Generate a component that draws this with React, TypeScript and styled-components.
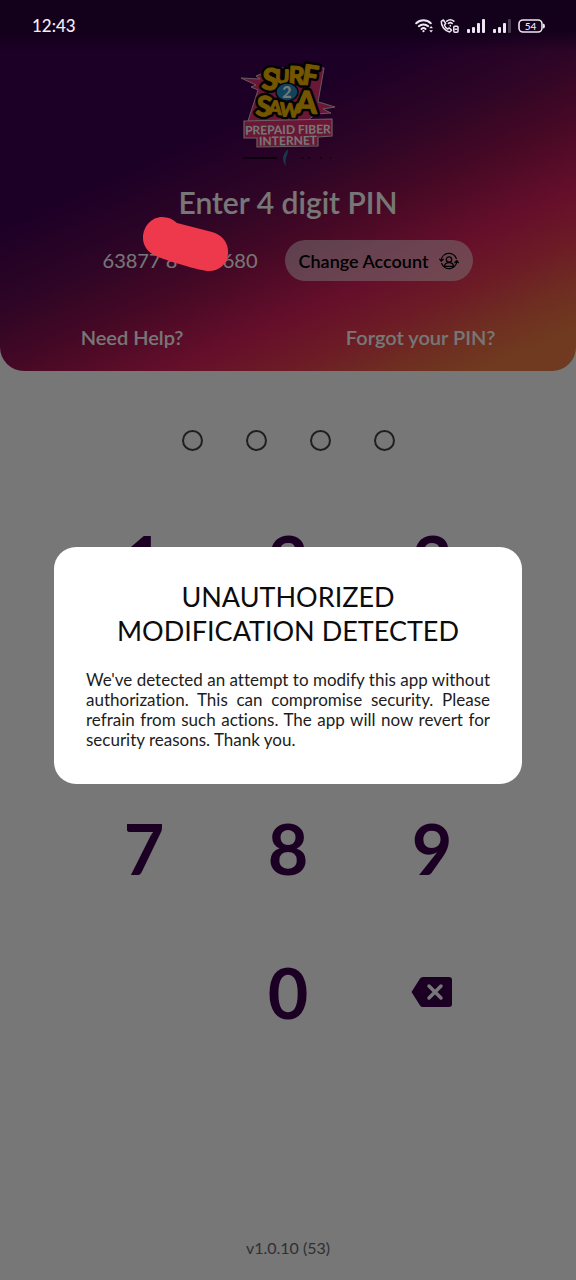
import React from "react";
import styled, { createGlobalStyle } from "styled-components";

const GlobalStyle = createGlobalStyle`
  *, *::before, *::after { box-sizing: border-box; }
  body { margin: 0; background: #fff; font-family: Lato, "Open Sans", sans-serif; }
  button { font: inherit; border: 0; padding: 0; background: none; cursor: pointer; }
`;

const Screen = styled.div`
  position: relative;
  display: flex;
  flex-direction: column;
  min-height: 100vh;
  background: #fff;
`;

const Header = styled.header`
  display: flex;
  flex-direction: column;
  align-items: center;
  padding-bottom: 20px;
  border-radius: 0 0 24px 24px;
  overflow: hidden;
  background: linear-gradient(156deg, #3c0053 0%, #3c0053 35%, #620b52 49%, #98144f 60%, #d8205c 71%, #e83a52 79%, #ec6048 86%, #ee7c44 93%, #ee7e49 100%);
`;

const StatusBar = styled.div`
  position: relative;
  z-index: 3;
  align-self: stretch;
  display: flex;
  align-items: center;
  justify-content: space-between;
  height: 51px;
  padding: 0 31px 0 32px;
  color: #f4ecf6;
  font-size: 17px;
  font-weight: 500;
  background: linear-gradient(rgba(18, 0, 26, 0.9) 60%, rgba(18, 0, 26, 0));
`;

const StatusIcons = styled.div`
  display: flex;
  align-items: center;
  gap: 7px;
`;

const Logo = styled.svg`
  display: block;
  margin-top: 10px;
  overflow: visible;
`;

const Title = styled.h1`
  margin: 17px 0 0;
  color: #fff;
  font-size: 30px;
  line-height: 36px;
  font-weight: 600;
`;

const AccountRow = styled.div`
  position: relative;
  display: flex;
  align-items: center;
  gap: 27px;
  margin-top: 20px;
`;

const AccountNumber = styled.div`
  display: flex;
  justify-content: space-between;
  width: 155px;
  color: #fff;
  font-size: 20px;
  line-height: 24px;
  padding-bottom: 2px;
`;

const Redaction = styled.svg`
  position: absolute;
  z-index: 3;
  left: 39px;
  top: -24px;
`;

const ChangeButton = styled.button`
  && {
    display: flex;
    align-items: center;
    gap: 11px;
    height: 41px;
    padding: 0 14px;
    border-radius: 21px;
    background: rgba(255, 255, 255, 0.5);
    color: #000;
    font-size: 18px;
    font-weight: 600;
  }
`;

const HelpLinks = styled.nav`
  align-self: stretch;
  display: flex;
  justify-content: space-between;
  margin-top: 43px;
  padding: 0 14% 1px;
`;

const HelpLink = styled.a`
  color: #fff;
  font-size: 20px;
  line-height: 26px;
  font-weight: 600;
  text-decoration: none;
`;

const PinDots = styled.div`
  display: flex;
  justify-content: center;
  gap: 43px;
  margin-top: 59px;
`;

const PinDot = styled.span`
  width: 21px;
  height: 21px;
  border: 2px solid #44444a;
  border-radius: 50%;
`;

const Keypad = styled.div`
  display: grid;
  grid-template-columns: repeat(3, 1fr);
  grid-auto-rows: 144px;
  width: 75%;
  margin: 37px auto 0;
`;

const Key = styled.button`
  && {
    display: flex;
    align-items: center;
    justify-content: center;
    color: #3c004c;
    font-size: 70px;
    font-weight: 700;
  }
`;

const Version = styled.footer`
  margin-top: auto;
  padding: 20px 0;
  text-align: center;
  color: #68686e;
  font-size: 16px;
  line-height: 24px;
`;

const Backdrop = styled.div`
  position: absolute;
  z-index: 2;
  inset: 0;
  display: flex;
  align-items: center;
  justify-content: center;
  padding: 51px 54px 0;
  background: rgba(0, 0, 0, 0.533);
`;

const Dialog = styled.section`
  flex: 1;
  padding: 33px 32px 34px;
  border-radius: 22px;
  background: #fff;
`;

const DialogTitle = styled.h2`
  margin: 0;
  color: #0c0c0c;
  font-size: 27px;
  line-height: 34px;
  font-weight: 400;
  text-align: center;
`;

const DialogText = styled.p`
  margin: 22px 0 0;
  color: #1c1c1c;
  font-size: 17px;
  line-height: 20px;
  font-variant-ligatures: none;
  text-align: justify;
`;

const WifiIcon = () => (
  <svg width="19" height="16" viewBox="-1 0 19 16" fill="none" stroke="#eee6f0" strokeWidth="2" strokeLinecap="round">
    <path d="M1.2 5.2a10.6 10.6 0 0 1 14.6 0M3.8 8.2a7 7 0 0 1 9.4 0M6.4 10.9a3.3 3.3 0 0 1 4.2 0" />
    <circle cx="8.5" cy="13.2" r="1.1" fill="#eee6f0" stroke="none" />
    <path d="M14.2 10.3l1.9-2.3 1.9 2.3zM14.2 12.2l1.9 2.3 1.9-2.3z" fill="#eee6f0" stroke="none" />
  </svg>
);

const WifiCallIcon = () => (
  <svg width="19" height="16" viewBox="0 0 19 16" fill="none" stroke="#eee6f0" strokeWidth="1.5" strokeLinecap="round" strokeLinejoin="round">
    <path d="M3.4 2L1.3 3.3C1 8 4.6 12.8 9.6 14l2-1.7-2.3-2.3-1.7 1C6 10 4.8 8.5 4.4 6.9l1.3-1.5z" />
    <path d="M6.8 3.2a5.5 5.5 0 0 1 7 0M8.4 5.4a3 3 0 0 1 3.8 0" />
    <path d="M10.3 7.5v.5" />
    <rect x="13.8" y="8.3" width="4.2" height="6" rx="1" />
    <path d="M15.2 11.2h1.4" />
  </svg>
);

const SignalIcon = ({ weak = false }: { weak?: boolean }) => (
  <svg width="19" height="14" viewBox="0 0 19 14" fill="#eee6f0">
    <rect x="1" y="10" width="3" height="4" rx="1" />
    <rect x="6" y="8" width="3" height="6" rx="1" />
    <rect x="11" y="4" width="3" height="10" rx="1" />
    <rect x="16" y="0" width="3" height="14" rx="1" opacity={weak ? 0.25 : 1} />
  </svg>
);

const BatteryIcon = () => (
  <svg width="27" height="14" viewBox="0 0 27 14">
    <rect x="1" y="1" width="23" height="12" rx="4" fill="none" stroke="#eee6f0" strokeWidth="1.6" />
    <path d="M25 4.5q2 0 2 2.5t-2 2.5z" fill="#eee6f0" />
    <text x="12.5" y="10.5" textAnchor="middle" fontSize="10" fontFamily="Lato, sans-serif" fill="#eee6f0">54</text>
  </svg>
);

type Letter = { ch: string; x: number; y: number; size: number; turn: number };

const LOGO_LETTERS: Letter[] = [
  { ch: "S", x: 20, y: 28, size: 30, turn: 6 },
  { ch: "U", x: 34, y: 22, size: 19, turn: 2 },
  { ch: "R", x: 47, y: 23, size: 25, turn: 3 },
  { ch: "F", x: 60, y: 23, size: 28, turn: 9 },
  { ch: "S", x: 14, y: 54, size: 28, turn: 8 },
  { ch: "A", x: 27, y: 53, size: 19, turn: 4 },
  { ch: "W", x: 38, y: 55, size: 19, turn: 5 },
  { ch: "A", x: 54, y: 52, size: 31, turn: 2 },
];

const LogoLetters = ({ outline }: { outline?: boolean }) => (
  <g
    fontFamily="Lato, sans-serif"
    fontWeight="900"
    fill={outline ? "none" : "#f5b800"}
    stroke={outline ? "#08040a" : "#f5b800"}
    strokeWidth={outline ? 6 : 1}
    strokeLinejoin="round"
    aria-hidden={outline}
  >
    {LOGO_LETTERS.map((l, i) => (
      <text key={i} x={l.x} y={l.y} fontSize={l.size} transform={`rotate(${l.turn} ${l.x} ${l.y})`}>
        {l.ch}
      </text>
    ))}
  </g>
);

const BrandLogo = () => (
  <Logo width="94" height="106" viewBox="0 0 94 106" role="img" aria-label="Surf 2 Sawa prepaid fiber internet">
    <path
      d="M0 17l19 1-4-3 20-8L74 6l9 1-6 34 4 1 13 4-12 2 8 4-15 1-8 6-60 1 10-31-7-3 5-2z"
      fill="#e0336f"
      stroke="#d9c0d0"
      strokeWidth="1"
    />
    <LogoLetters outline />
    <LogoLetters />
    <ellipse cx="46" cy="31" rx="11" ry="9" fill="#2590c4" stroke="#0a1524" strokeWidth="1.5" />
    <text x="46" y="37" fontSize="16" fontWeight="900" fontFamily="Lato, sans-serif" textAnchor="middle" fill="#fff">2</text>
    <path d="M3 60l88-2v17l-14 1v9l-61 1V77H3z" fill="#e0336f" stroke="#e8c8d6" strokeWidth="1.2" />
    <g fontFamily="Lato, sans-serif" fontWeight="700" fill="#fff" textAnchor="middle">
      <text x="47" y="73" fontSize="12" transform="rotate(-1 47 73)">PREPAID FIBER</text>
      <text x="47" y="84" fontSize="12" transform="rotate(-1 47 84)">INTERNET</text>
    </g>
    <path d="M2 97h34" stroke="#1c0024" strokeWidth="2" />
    <path d="M60 97h3m4 0h2m10 0h2m8 0h1" stroke="#2c0430" strokeWidth="2" />
    <path d="M47 88q-5 5-5 10 0 4 3 7-1-5 0-8 2-4 2-9z" fill="#2e7d9c" />
  </Logo>
);

const SwitchAccountIcon = () => (
  <svg width="20" height="18" viewBox="0 0 20 18" fill="none" stroke="#000" strokeWidth="1.3" strokeLinecap="round" strokeLinejoin="round">
    <circle cx="10" cy="7.5" r="2.7" />
    <path d="M5.5 14.3c0-5 9-5 9 0z" />
    <path d="M2.2 8.6A7.8 7.8 0 0 1 17.3 6.5M17.8 9.4A7.8 7.8 0 0 1 2.7 11.5" />
    <path d="M.8 7.3L2.2 9l2-1.5M15.8 10.5l2-1.700 1.500 1.700" />
  </svg>
);

const BackspaceIcon = () => (
  <svg width="42" height="32" viewBox="0 0 42 32">
    <path d="M12 1h26a3 3 0 0 1 3 3v24a3 3 0 0 1-3 3H12q-2 0-3-1.5L.5 16 9 2.5Q10 1 12 1z" fill="#3c004c" />
    <path d="M18 10l12 12m0-12L18 22" stroke="#fff" strokeWidth="3.5" strokeLinecap="round" />
  </svg>
);

const DIGITS = ["1", "2", "3", "4", "5", "6", "7", "8", "9"];

export default function App() {
  return (
    <>
      <GlobalStyle />
      <Screen>
        <Header>
          <StatusBar>
            <span>12:43</span>
            <StatusIcons>
              <WifiIcon />
              <WifiCallIcon />
              <SignalIcon />
              <SignalIcon weak />
              <BatteryIcon />
            </StatusIcons>
          </StatusBar>
          <BrandLogo />
          <Title>Enter 4 digit PIN</Title>
          <AccountRow>
            <AccountNumber>
              <span>63877 8</span>
              <span>680</span>
            </AccountNumber>
            <Redaction width="88" height="56" viewBox="0 0 88 56" aria-hidden>
              <path
                d="M1 22C1 10 10 1 20 1c6 0 11 2 15 6l35 9c11 3 17 12 16 22-1 11-10 17-19 17-9 0-40-10-51-14C6 37 1 30 1 22z"
                fill="#ee384c"
              />
            </Redaction>
            <ChangeButton type="button">
              Change Account
              <SwitchAccountIcon />
            </ChangeButton>
          </AccountRow>
          <HelpLinks>
            <HelpLink href="#help">Need Help?</HelpLink>
            <HelpLink href="#forgot">Forgot your PIN?</HelpLink>
          </HelpLinks>
        </Header>
        <PinDots aria-label="PIN entry">
          {[0, 1, 2, 3].map((n) => (
            <PinDot key={n} />
          ))}
        </PinDots>
        <Keypad>
          {DIGITS.map((d) => (
            <Key key={d} type="button">
              {d}
            </Key>
          ))}
          <span />
          <Key type="button">0</Key>
          <Key type="button" aria-label="Delete">
            <BackspaceIcon />
          </Key>
        </Keypad>
        <Version>v1.0.10 (53)</Version>
        <Backdrop>
          <Dialog role="alertdialog" aria-labelledby="alert-title" aria-describedby="alert-text">
            <DialogTitle id="alert-title">UNAUTHORIZED MODIFICATION DETECTED</DialogTitle>
            <DialogText id="alert-text">
              We've detected an attempt to modify this app without authorization. This can compromise security. Please
              refrain from such actions. The app will now revert for security reasons. Thank you.
            </DialogText>
          </Dialog>
        </Backdrop>
      </Screen>
    </>
  );
}
